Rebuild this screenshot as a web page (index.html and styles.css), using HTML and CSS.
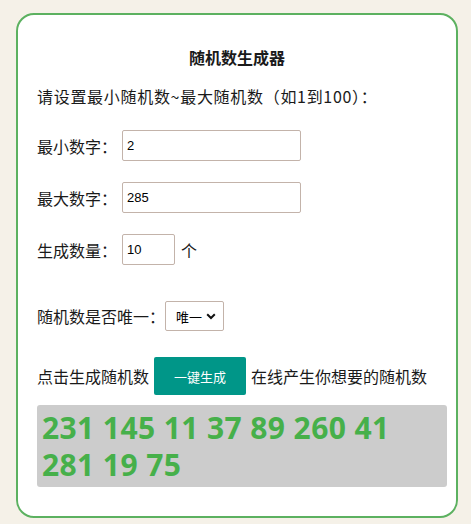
FILE: index.html
```html
<!DOCTYPE html>
<html lang="zh-CN">
<head>
<meta charset="utf-8">
<title>随机数生成器</title>
<link rel="stylesheet" href="styles.css">
</head>
<body>
<div class="card">
  <h1 class="title">随机数生成器</h1>
  <p class="intro">请设置最小随机数~最大随机数（如1到100）：</p>
  <div class="row row-first">
    <span class="label">最小数字：</span>
    <input class="field field-wide" type="text" value="2">
  </div>
  <div class="row">
    <span class="label">最大数字：</span>
    <input class="field field-wide" type="text" value="285">
  </div>
  <div class="row">
    <span class="label">生成数量：</span>
    <input class="field field-short" type="text" value="10">
    <span class="unit">个</span>
  </div>
  <div class="row row-select">
    <span class="label">随机数是否唯一：</span>
    <select class="choice">
      <option>唯一</option>
      <option>不唯一</option>
    </select>
  </div>
  <div class="row row-button">
    <span>点击生成随机数</span>
    <button class="btn" type="button">一键生成</button>
    <span>在线产生你想要的随机数</span>
  </div>
  <div class="result">231 145 11 37 89 260 41 281 19 75</div>
</div>
</body>
</html>
```

FILE: styles.css
```css
html, body {
  margin: 0;
  padding: 0;
}
body {
  background: #f5f1e8;
  font-family: "Noto Sans CJK SC", "Noto Sans", sans-serif;
  color: #1a1a1a;
  font-size: 16px;
}
.card {
  box-sizing: border-box;
  width: 442px;
  margin: 13px 0 0 16px;
  border: 2px solid #5cb160;
  border-radius: 18px;
  background: #fff;
  padding: 30px 9px 29px 19px;
}
.title {
  margin: 0;
  font-size: 16px;
  font-weight: 700;
  line-height: 24px;
  height: 24px;
  text-align: center;
  padding-right: 10px;
}
.intro {
  margin: 15px 0 0;
  line-height: 24px;
  height: 24px;
  letter-spacing: 0.7px;
}
.row {
  display: flex;
  align-items: center;
  gap: 5px;
  height: 31px;
  margin-top: 21px;
}
.row-first {
  margin-top: 22px;
}
.row-select {
  margin-top: 36px;
  height: 30px;
  gap: 0;
}
.row-button {
  margin-top: 26px;
  height: 38px;
}
.label {
  line-height: 24px;
}
.field {
  box-sizing: border-box;
  height: 31px;
  border: 1px solid #c3b3aa;
  border-radius: 2px;
  padding: 0 4px;
  font-family: "Liberation Sans", Arial, sans-serif;
  font-size: 13px;
  color: #000;
  background: #fff;
  outline: none;
}
.field-wide {
  width: 179px;
}
.field-short {
  width: 53px;
}
.unit {
  margin-left: 1px;
}
.choice {
  box-sizing: border-box;
  width: 59px;
  height: 30px;
  border: 1px solid #c3b3aa;
  border-radius: 2px;
  padding: 0 0 0 10px;
  font-family: "Noto Sans CJK SC", sans-serif;
  font-size: 13px;
  color: #000;
  -webkit-appearance: none;
  appearance: none;
  background: #fff url("data:image/svg+xml,%3Csvg xmlns='http://www.w3.org/2000/svg' width='10' height='7' viewBox='0 0 10 7'%3E%3Cpath d='M1.2 1.3 L5 5 L8.8 1.3' fill='none' stroke='%23111' stroke-width='2'/%3E%3C/svg%3E") no-repeat right 7px center;
}
.btn {
  box-sizing: border-box;
  width: 92px;
  height: 38px;
  border: none;
  border-radius: 2px;
  background: #009688;
  color: #fff;
  font-family: "Noto Sans CJK SC", sans-serif;
  font-size: 13px;
  padding: 0;
}
.result {
  margin-top: 10px;
  width: 410px;
  box-sizing: border-box;
  background: #cccccc;
  border-radius: 3px;
  padding: 4px 6px 4px 5px;
  min-height: 82px;
  font-family: "Open Sans", sans-serif;
  font-weight: 700;
  font-size: 30px;
  line-height: 37px;
  letter-spacing: 0.4px;
  color: #46b04a;
}
```
